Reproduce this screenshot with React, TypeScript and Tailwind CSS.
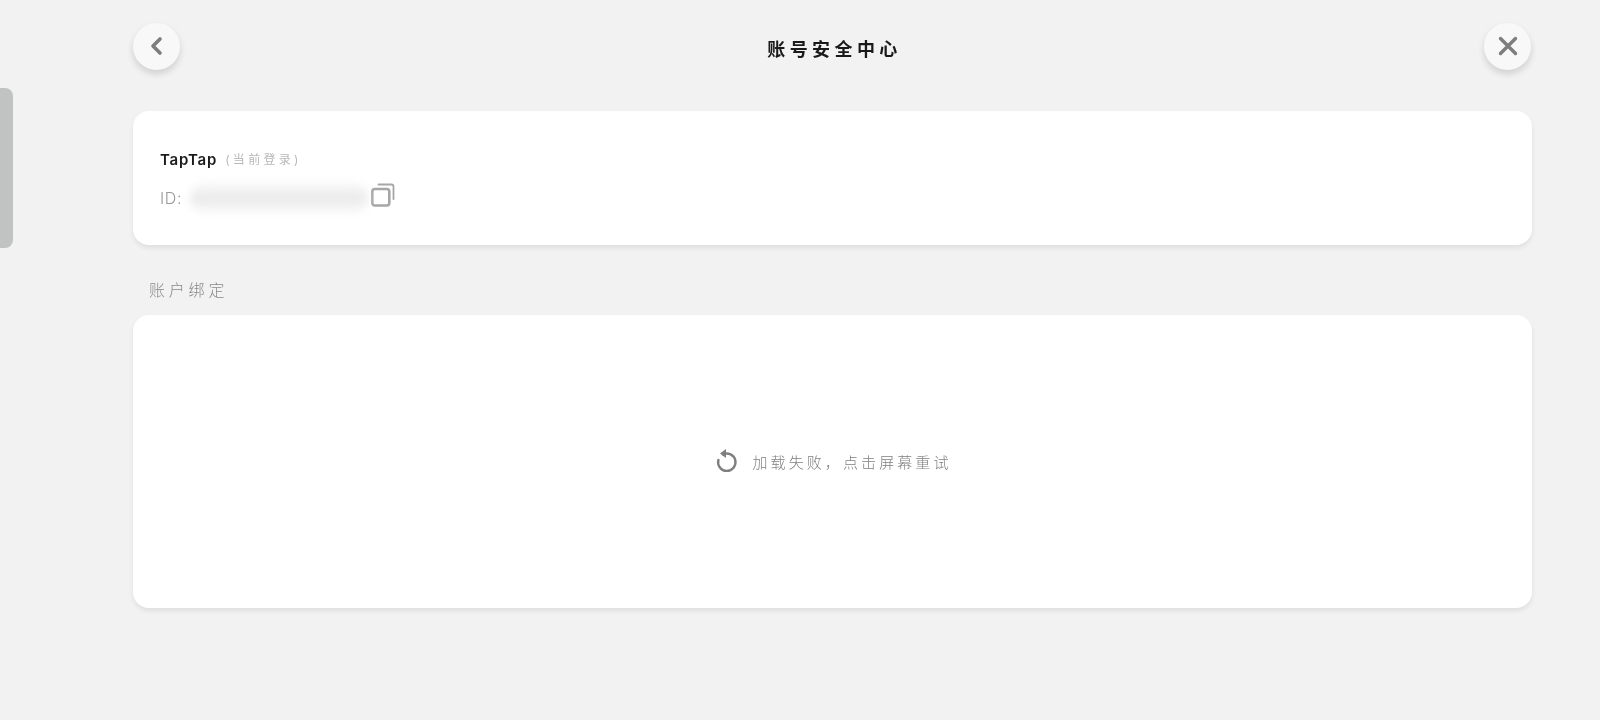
const FONT = 'font-["Inter","Noto_Sans_CJK_SC",sans-serif]';

function RoundButton({ children }: { children: React.ReactNode }) {
  return (
    <button className="flex h-[47px] w-[47px] items-center justify-center rounded-full bg-[#f8f8f8] shadow-[0_4px_7px_rgba(0,0,0,0.14)]">
      {children}
    </button>
  );
}

export default function App() {
  return (
    <div className={`relative h-[720px] overflow-hidden bg-[#f2f2f2] ${FONT}`}>
      <div className="h-full pl-[133px] pr-[68px] pt-[23px] blur-[0.4px]">
        {/* side handle */}
        <div className="absolute left-0 top-[88px] h-[160px] w-[13px] rounded-r-[8px] bg-[#c1c3c2]" />

        {/* Header */}
        <div className="flex h-[47px] items-center justify-between pr-[1px]">
          <RoundButton>
            <svg className="-ml-[2px] -mt-[2px]" width="16" height="20" viewBox="0 0 16 20" fill="none">
              <path d="M12 3 5 10l7 7" stroke="#7d7d7d" strokeWidth="3.6" strokeLinecap="round" strokeLinejoin="round" />
            </svg>
          </RoundButton>
          <h1 className="ml-[5px] mt-[7px] text-[18px] font-bold leading-[26px] tracking-[4.4px] text-[#1a1a1a]">账号安全中心</h1>
          <RoundButton>
            <svg className="-mt-[1px]" width="22" height="22" viewBox="0 0 22 22" fill="none">
              <path d="M3.5 3.5l15 15M18.5 3.5l-15 15" stroke="#7d7d7d" strokeWidth="3.4" strokeLinecap="round" />
            </svg>
          </RoundButton>
        </div>

        {/* Account card */}
        <div className="mt-[41px] flex h-[134px] flex-col rounded-[16px] bg-white pl-[27px] pt-[38px] shadow-[0_3px_5px_rgba(0,0,0,0.08)]">
          <div className="flex items-center">
            <span className="text-[15px] font-semibold leading-[22px] tracking-[0.8px] text-[#1a1a1a]">TapTap</span>
            <span className="ml-[8px] text-[12px] leading-[22px] tracking-[3.3px] text-[#b9b9b9]">(当前登录)</span>
          </div>
          <div className="mt-[12px] flex h-[30px] items-center">
            <span className="text-[16px] font-light leading-[30px] tracking-[0.6px] text-[#9a9a9a]">ID:</span>
            <div className="ml-[8px] h-[30px] w-[178px] rounded-full bg-[linear-gradient(#fafafa,#e9e9e9_50%,#fafafa)] blur-[5px]" />
            <svg className="-mt-[6px] ml-[3px]" width="24" height="24" viewBox="0 0 24 24" fill="none">
              <rect x="1.3" y="6" width="17" height="16.5" rx="2.5" stroke="#a6a6a6" strokeWidth="2.6" />
              <path d="M7.5 1.5h13a2 2 0 0 1 2 2V16" stroke="#a6a6a6" strokeWidth="1.8" strokeLinecap="round" />
            </svg>
          </div>
        </div>

        {/* Binding section */}
        <div className="mt-[32px] pl-[16px] text-[16px] font-light leading-[26px] tracking-[3.8px] text-[#8a8a8a]">账户绑定</div>
        <div className="mt-[12px] flex h-[293px] items-center justify-center rounded-[16px] bg-white shadow-[0_3px_5px_rgba(0,0,0,0.08)]">
          <svg className="-mt-[2px] ml-[2px]" width="24" height="26" viewBox="0 0 24 26" fill="none">
            <path d="M8 6.4A8.7 8.7 0 1 1 3.4 12" stroke="#7f7f7f" strokeWidth="2.4" strokeLinecap="round" />
            <path d="M11 1v9L5 5.5z" fill="#7f7f7f" />
          </svg>
          <span className="ml-[13px] mt-[2px] text-[15px] font-light leading-[24px] tracking-[3.1px] text-[#7f7f7f]">加载失败，点击屏幕重试</span>
        </div>
      </div>
    </div>
  );
}
